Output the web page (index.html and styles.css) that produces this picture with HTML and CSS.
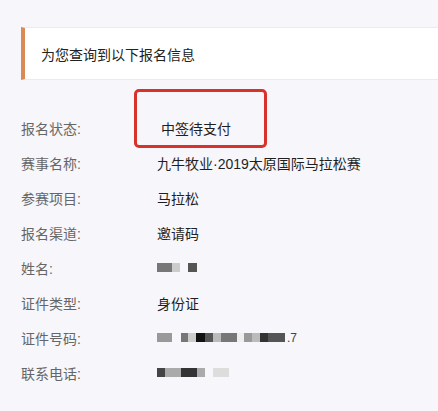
FILE: index.html
```html
<html>
  <head>
    <meta charset="utf-8">
    <link rel="stylesheet" href="styles.css">
  </head>
  <body>
    <div class="page">
      <div class="notice">为您查询到以下报名信息</div>
      <div class="info">
        <div class="row">
          <span class="label">报名状态:</span>
          <span class="value status">中签待支付</span>
        </div>
        <div class="row">
          <span class="label">赛事名称:</span>
          <span class="value">九牛牧业·2019太原国际马拉松赛</span>
        </div>
        <div class="row">
          <span class="label">参赛项目:</span>
          <span class="value">马拉松</span>
        </div>
        <div class="row">
          <span class="label">报名渠道:</span>
          <span class="value">邀请码</span>
        </div>
        <div class="row">
          <span class="label">姓名:</span>
          <span class="value mosaic">
            <i class="px w15 g7"></i><i class="px w8 gc"></i><i class="px w8 gf"></i><i class="px w9 g5"></i>
          </span>
        </div>
        <div class="row">
          <span class="label">证件类型:</span>
          <span class="value">身份证</span>
        </div>
        <div class="row">
          <span class="label">证件号码:</span>
          <span class="value mosaic">
            <i class="px w15 g9"></i><i class="px w9 gf"></i><i class="px w7 g7"></i><i class="px w8 gc"></i><i class="px w9 g1"></i><i class="px w8 g5"></i><i class="px w8 gb"></i><i class="px w16 g7"></i><i class="px w7 ge"></i><i class="px w8 g9"></i><i class="px w8 gb"></i><i class="px w8 g3"></i><i class="px w17 g5"></i><span class="tail">.7</span>
          </span>
        </div>
        <div class="row">
          <span class="label">联系电话:</span>
          <span class="value mosaic">
            <i class="px w8 g4"></i><i class="px w16 ga"></i><i class="px w16 g3"></i><i class="px w8 ga"></i><i class="px w8 gf"></i><i class="px w16 gd"></i>
          </span>
        </div>
      </div>
      <div class="mark"></div>
    </div>
  </body>
</html>
```

FILE: styles.css
```css
html, body {
    margin: 0;
    background: #f7f6fa;
}
.page {
    position: relative;
    width: 438px;
    height: 411px;
    padding: 27px 0 0 21px;
    box-sizing: border-box;
    font-family: "Liberation Sans", "Noto Sans CJK SC", sans-serif;
    font-size: 14px;
}
.notice {
    height: 53px;
    display: flex;
    align-items: center;
    padding-left: 16px;
    background: #fff;
    border-left: 4px solid #d98a55;
    border-top: 1px solid #ebeaee;
    border-bottom: 1px solid #ebeaee;
    box-sizing: border-box;
    color: #222;
}
.info {
    display: flex;
    flex-direction: column;
    padding-top: 30px;
}
.row {
    height: 35px;
    display: flex;
    align-items: center;
}
.label {
    flex: none;
    width: 136px;
    color: #666;
}
.value {
    flex: none;
    color: #1f1f1f;
}
.status {
    padding-left: 4px;
}
.mosaic {
    display: flex;
    align-items: center;
    height: 10px;
}
.px {
    display: block;
    height: 9px;
}
.tail {
    font-size: 12px;
    color: #444;
    margin-left: 2px;
}
.w7 { width: 7px; }
.w8 { width: 8px; }
.w9 { width: 9px; }
.w15 { width: 15px; }
.w16 { width: 16px; }
.w17 { width: 17px; }
.g1 { background: #111; }
.g3 { background: #333; }
.g4 { background: #444; }
.g5 { background: #555; }
.g7 { background: #777; }
.g9 { background: #999; }
.ga { background: #aaa; }
.gb { background: #bbb; }
.gc { background: #ccc; }
.gd { background: #ddd; }
.ge { background: #eee; }
.gf { background: #f7f6fa; }
.mark {
    position: absolute;
    left: 134px;
    top: 89px;
    width: 133px;
    height: 59px;
    border: 3px solid #d8322c;
    border-radius: 5px;
    box-sizing: border-box;
}
```
